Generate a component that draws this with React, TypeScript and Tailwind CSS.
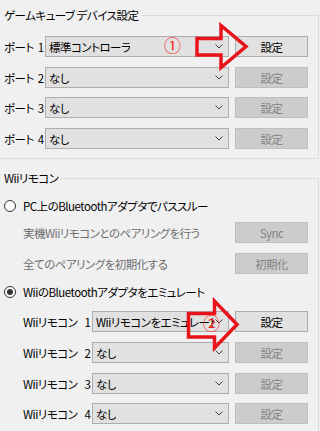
import React from 'react';

const Chevron: React.FC = () => (
    <svg width="8" height="5" viewBox="0 0 8 5" className="shrink-0">
        <polyline points="0.5,0.5 4,4 7.5,0.5" fill="none" stroke="#404040" strokeWidth="1" />
    </svg>
);

const Combo: React.FC<{ value: string; width: string }> = ({ value, width }) => (
    <div className={`${width} h-[21px] flex items-center justify-between bg-[#e1e1e1] border border-[#adadad] pl-[3px] pr-[5px] shrink-0`}>
        <span className="whitespace-nowrap overflow-hidden">{value}</span>
        <Chevron />
    </div>
);

const Btn: React.FC<{ label: string; disabled?: boolean }> = ({ label, disabled }) => (
    <div
        className={
            disabled
                ? 'ml-auto w-[73px] h-[21px] flex items-center justify-center bg-[#cccccc] border border-[#bfbfbf] text-[#838383] shrink-0'
                : 'ml-auto w-[73px] h-[21px] flex items-center justify-center bg-[#e1e1e1] border border-[#adadad] text-black shrink-0'
        }
    >
        {label}
    </div>
);

const Radio: React.FC<{ checked?: boolean; label: string }> = ({ checked, label }) => (
    <div className="h-[16px] flex items-center pl-[4px]">
        <div className="w-[12px] h-[12px] rounded-full border border-[#333333] bg-white flex items-center justify-center shrink-0">
            {checked && <div className="w-[6px] h-[6px] rounded-full bg-[#333333]" />}
        </div>
        <span className="ml-[7px] whitespace-nowrap">{label}</span>
    </div>
);

export default function App() {
    const ports = [
        { n: '1', value: '標準コントローラ', enabled: true },
        { n: '2', value: 'なし', enabled: false },
        { n: '3', value: 'なし', enabled: false },
        { n: '4', value: 'なし', enabled: false },
    ];
    const remotes = [
        { n: '1', value: 'Wiiリモコンをエミュレート', enabled: true },
        { n: '2', value: 'なし', enabled: false },
        { n: '3', value: 'なし', enabled: false },
        { n: '4', value: 'なし', enabled: false },
    ];
    const portGaps = ['mt-0', 'mt-[10px]', 'mt-[9px]', 'mt-[10px]'];
    const remoteGaps = ['mt-[11px]', 'mt-[10px]', 'mt-[10px]', 'mt-[9px]'];

    return (
        <div className="relative w-[320px] h-[431px] overflow-hidden bg-[#f0f0f0] text-black text-[11.5px] tracking-[-0.5px] leading-[16px] font-['Noto_Sans_CJK_JP','Noto_Sans',sans-serif] [font-feature-settings:'palt']">
            <div className="pt-[7px] pr-[1px]">
                {/* ゲームキューブ */}
                <fieldset className="border border-l-0 border-[#dcdcdc] pb-[9px] pr-[10px]">
                    <legend className="pl-[4px] pr-[3px]">ゲームキューブ デバイス設定</legend>
                    <div className="pt-[13px] pl-[4px]">
                        {ports.map((p, i) => (
                            <div key={p.n} className={`${portGaps[i]} flex items-center h-[21px]`}>
                                <div className="w-[41px] flex shrink-0 whitespace-nowrap">
                                    <span>ポート</span>
                                    <span className="ml-[4px]">{p.n}</span>
                                </div>
                                <Combo value={p.value} width="w-[184px]" />
                                <Btn label="設定" disabled={!p.enabled} />
                            </div>
                        ))}
                    </div>
                </fieldset>

                {/* Wiiリモコン */}
                <fieldset className="mt-[11px] border border-l-0 border-[#dcdcdc] pb-[12px] pr-[10px]">
                    <legend className="pl-[4px] pr-[3px]">Wiiリモコン</legend>
                    <div className="pt-[12px]">
                        <Radio label="PC上のBluetoothアダプタでパススルー" />
                        <div className="mt-[8px] flex items-center h-[21px] pl-[23px] text-[#6d6d6d]">
                            <span className="whitespace-nowrap">実機Wiiリモコンとのペアリングを行う</span>
                            <Btn label="Sync" disabled />
                        </div>
                        <div className="mt-[10px] flex items-center h-[21px] pl-[23px] text-[#6d6d6d]">
                            <span className="whitespace-nowrap">全てのペアリングを初期化する</span>
                            <Btn label="初期化" disabled />
                        </div>
                        <div className="mt-[10px]">
                            <Radio checked label="WiiのBluetoothアダプタをエミュレート" />
                        </div>
                        <div className="pl-[23px]">
                            {remotes.map((r, i) => (
                                <div key={r.n} className={`${remoteGaps[i]} flex items-center h-[21px]`}>
                                    <div className="w-[69px] flex shrink-0 whitespace-nowrap">
                                        <span>Wiiリモコン</span>
                                        <span className="ml-[7px]">{r.n}</span>
                                    </div>
                                    <Combo value={r.value} width="w-[137px]" />
                                    <Btn label="設定" disabled={!r.enabled} />
                                </div>
                            ))}
                        </div>
                    </div>
                </fieldset>
            </div>

            {/* 注釈 */}
            <span className="absolute left-[164px] top-[36px] text-[17px] leading-[18px] tracking-normal text-[#ff1a1a]">①</span>
            <span className="absolute left-[203px] top-[314px] text-[17px] leading-[18px] tracking-normal text-[#ff1a1a]">②</span>
            <svg className="absolute inset-0 pointer-events-none" width="320" height="431" viewBox="0 0 320 431">
                <polygon
                    points="197,38.5 221,38.5 221,25.5 246,46.5 221,67.5 221,55 197,55"
                    fill="none"
                    stroke="#e8141c"
                    strokeWidth="3.5"
                />
                <polygon
                    points="188.5,313.5 214.5,313.5 214.5,301 237,324.5 214.5,348 214.5,337 188.5,337"
                    fill="none"
                    stroke="#e8141c"
                    strokeWidth="3.5"
                />
            </svg>
        </div>
    );
}
